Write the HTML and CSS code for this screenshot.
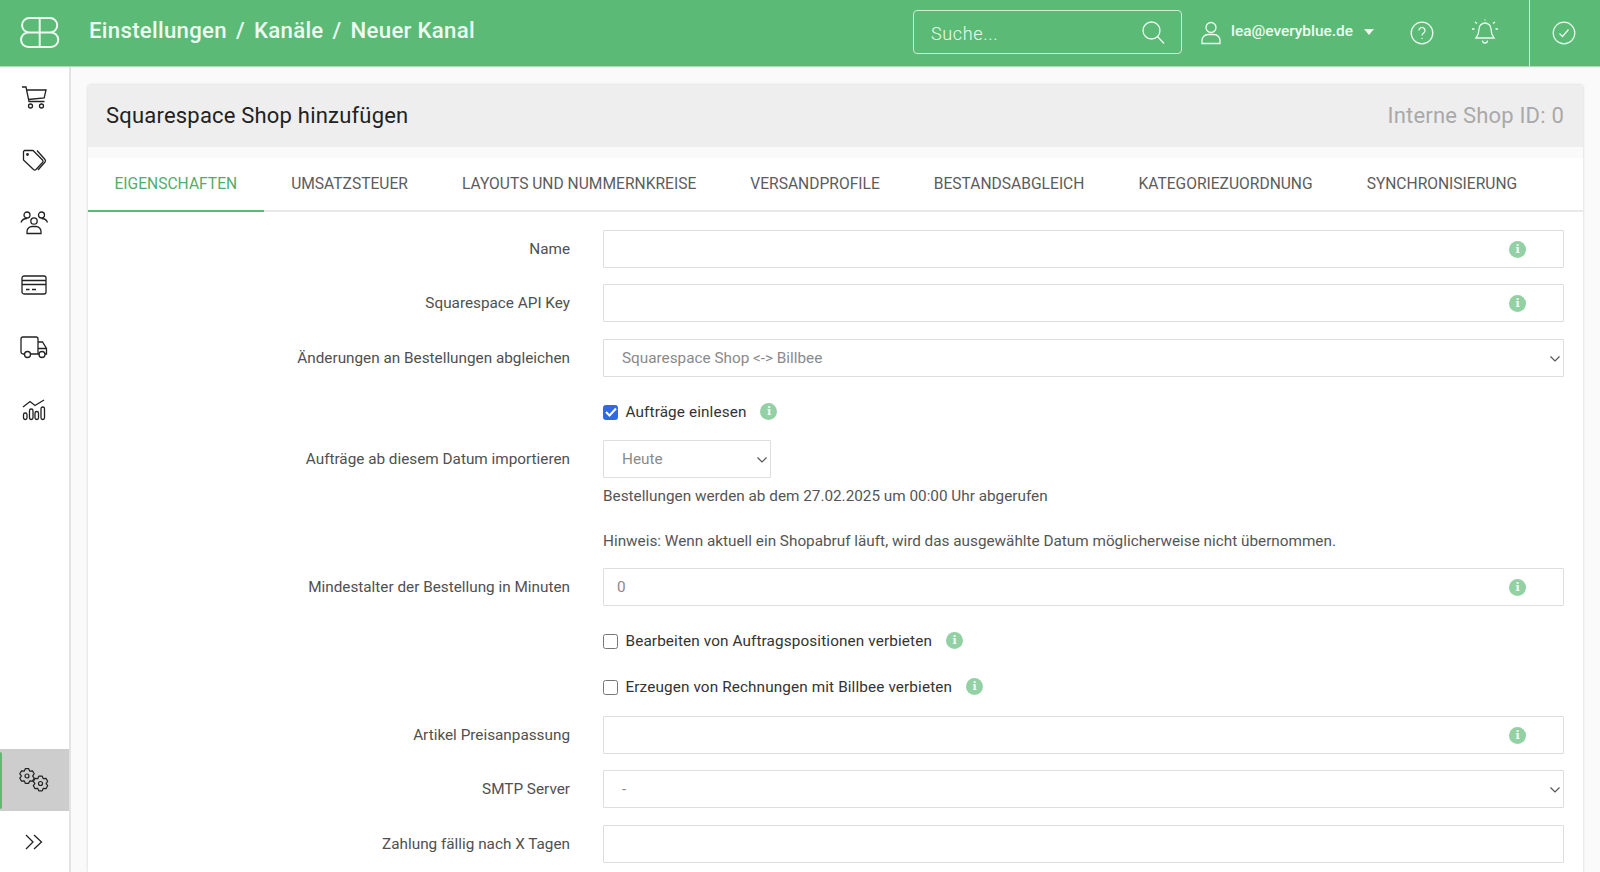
FILE: index.html
```html
<!DOCTYPE html>
<html lang="de">
<head>
<meta charset="utf-8">
<title>Neuer Kanal</title>
<link rel="stylesheet" href="styles.css">
</head>
<body>
<div class="app">
  <header class="topbar">
    <div class="logo">
      <svg width="40" height="31" viewBox="0 0 40 31" fill="none" stroke="currentColor" stroke-width="2"><path d="M19.700 1H9.300a7.250 7.250 0 0 0 0 14.500h10.400V1ZM19.700 1H30a7.250 7.250 0 0 1 0 14.500H19.700M19.700 15.500H8.300a7.250 7.250 0 0 0 0 14.500h11.400V15.500ZM19.700 15.500H31a7.250 7.250 0 0 1 0 14.500H19.700"/></svg>
    </div>
    <nav class="crumbs"><span>Einstellungen</span><span class="sep">/</span><span>Kanäle</span><span class="sep">/</span><span>Neuer Kanal</span></nav>
    <div class="search">
      <span class="search-text">Suche...</span>
      <svg width="24" height="24" viewBox="0 0 24 24" fill="none" stroke="currentColor" stroke-width="1.300"><circle cx="10.500" cy="10.500" r="8.500"/><path d="M16.500 16.500 23 23.500"/></svg>
    </div>
    <div class="user">
      <svg width="22" height="24" viewBox="0 0 22 24" fill="none" stroke="currentColor" stroke-width="1.300"><circle cx="11" cy="6.500" r="5"/><path d="M2 22.500v-3a6 6 0 0 1 6-6h6a6 6 0 0 1 6 6v3Z"/></svg>
      <span class="user-name">lea@everyblue.de</span>
      <span class="caret"></span>
    </div>
    <div class="top-icon help">
      <svg width="24" height="24" viewBox="0 0 24 24" fill="none" stroke="currentColor" stroke-width="1.300"><circle cx="12" cy="12" r="10.800"/><path d="M9 9.500a3 3 0 1 1 4.600 2.500c-1 .7-1.600 1.300-1.600 2.500M12 17v1"/></svg>
    </div>
    <div class="top-icon bell">
      <svg width="28" height="28" viewBox="0 0 28 28" fill="none" stroke="currentColor" stroke-width="1.300"><path d="M14 5a6 6 0 0 0-6 6c0 5-1.500 7-3 9h18c-1.500-2-3-4-3-9a6 6 0 0 0-6-6ZM11.500 22.500a2.500 2.500 0 0 0 5 0M14 1.500v1M4 4l2 1.500M24 4l-2 1.500M1 11h2.500M24.500 11H27"/></svg>
    </div>
    <div class="status">
      <svg width="24" height="24" viewBox="0 0 24 24" fill="none" stroke="currentColor" stroke-width="1.200"><circle cx="12" cy="12" r="10.800"/><path d="m7.500 12.500 3 3 6-7"/></svg>
    </div>
  </header>
  <div class="body">
    <aside class="sidebar">
      <a class="side-item">
        <svg width="26" height="24" viewBox="0 0 26 24" fill="none" stroke="currentColor" stroke-width="1.300"><path d="M1 1h4l3 14.500h15.500M5.700 4H25l-1.800 8L7.300 13.500"/><circle cx="9.500" cy="20" r="2"/><circle cx="20.500" cy="20" r="2"/></svg>
      </a>
      <a class="side-item">
        <svg width="25" height="23" viewBox="0 0 25 23" fill="none" stroke="currentColor" stroke-width="1.300"><path d="M2.500 1.500h8.500l9.500 9.500a1.800 1.800 0 0 1 0 2.500l-6.500 7a1.800 1.800 0 0 1-2.500 0L1.500 11V2.500Z"/><path d="M15 1.500l8 9a2 2 0 0 1 0 2.500l-7 8"/><circle cx="5.500" cy="5.500" r=".8"/></svg>
      </a>
      <a class="side-item">
        <svg width="28" height="24" viewBox="0 0 28 24" fill="none" stroke="currentColor" stroke-width="1.300"><circle cx="7" cy="4" r="3"/><circle cx="21.500" cy="4" r="3"/><circle cx="14" cy="10" r="3.200"/><path d="M1 11.500c1-3 3-4 6-4M27.500 11.500c-1-3-3-4-6-4M7 22.500v-2a5 5 0 0 1 5-5h4a5 5 0 0 1 5 5v2Z"/></svg>
      </a>
      <a class="side-item">
        <svg width="26" height="20" viewBox="0 0 26 20" fill="none" stroke="currentColor" stroke-width="1.300"><rect x="1" y="1" width="24" height="18" rx="2"/><path d="M1 5.500h24M1 9.500h24M5 14.500h3.500M11 14.500h4"/></svg>
      </a>
      <a class="side-item">
        <svg width="28" height="23" viewBox="0 0 28 23" fill="none" stroke="currentColor" stroke-width="1.300"><path d="M5 18H3a2 2 0 0 1-2-2V3a2 2 0 0 1 2-2h13a2 2 0 0 1 2 2v15h-8M18 6h4.500l4 6.500V18h-1.500M18 18h1.500M18 12.500h8.500"/><circle cx="7.500" cy="18.500" r="3"/><circle cx="22" cy="18.500" r="3"/></svg>
      </a>
      <a class="side-item">
        <svg width="24" height="22" viewBox="0 0 24 22" fill="none" stroke="currentColor" stroke-width="1.300"><path d="M1 8l7-5.500 5 4L22 1"/><rect x="1.500" y="14" width="3.500" height="6.500" rx="1.700"/><rect x="7.500" y="10" width="3.500" height="10.500" rx="1.700"/><rect x="13" y="12.500" width="3.500" height="8" rx="1.700"/><rect x="19" y="8" width="3.500" height="12.500" rx="1.700"/></svg>
      </a>
      <div class="side-spacer"></div>
      <a class="side-item active">
        <svg width="30" height="26" viewBox="0 0 30 26" fill="none" stroke="currentColor" stroke-width="1.200" stroke-linejoin="round">
          <defs><path id="gear" d="M-1.690-7.310 1.690-7.310 2.670-5.030 3.020-4.830 5.490-5.110 7.170-2.190 5.700-.2 5.700.2 7.170 2.190 5.490 5.110 3.020 4.830 2.670 5.030 1.690 7.310-1.690 7.310-2.670 5.030-3.020 4.830-5.490 5.110-7.170 2.190-5.700.2-5.700-.2-7.170-2.190-5.490-5.110-3.020-4.830-2.670-5.030Z"/></defs>
          <use href="#gear" x="8" y="9"/><circle cx="8" cy="9" r="2"/>
          <use href="#gear" x="21.500" y="16.500"/><circle cx="21.500" cy="16.500" r="2"/>
        </svg>
      </a>
      <a class="side-item last">
        <svg width="18" height="16" viewBox="0 0 18 16" fill="none" stroke="currentColor" stroke-width="1.300"><path d="m1 1 7 7-7 7M9 1l7.500 7L9 15"/></svg>
      </a>
    </aside>
    <main class="content">
      <section class="card">
        <div class="card-head">
          <h1 class="card-title">Squarespace Shop hinzufügen</h1>
          <span class="shop-id">Interne Shop ID: 0</span>
        </div>
        <ul class="tabs">
          <li class="tab current">Eigenschaften</li>
          <li class="tab">Umsatzsteuer</li>
          <li class="tab">Layouts und Nummernkreise</li>
          <li class="tab">Versandprofile</li>
          <li class="tab">Bestandsabgleich</li>
          <li class="tab">Kategoriezuordnung</li>
          <li class="tab">Synchronisierung</li>
        </ul>
        <form class="form">
          <div class="row">
            <label class="lbl">Name</label>
            <div class="ctl"><div class="field"><span class="info at-end">i</span></div></div>
          </div>
          <div class="row">
            <label class="lbl">Squarespace API Key</label>
            <div class="ctl"><div class="field"><span class="info at-end">i</span></div></div>
          </div>
          <div class="row">
            <label class="lbl">Änderungen an Bestellungen abgleichen</label>
            <div class="ctl"><div class="field select">Squarespace Shop &lt;-&gt; Billbee<svg class="chev" width="10" height="6" viewBox="0 0 10 6" fill="none" stroke="currentColor" stroke-width="1.200"><path d="m.5.500 4.500 4.500L9.500.500"/></svg></div></div>
          </div>
          <div class="row check-row first-check">
            <span class="lbl"></span>
            <div class="ctl check-ctl"><span class="box on"><svg width="12" height="10" viewBox="0 0 12 10" fill="none" stroke="#fff" stroke-width="2"><path d="m1 5 3.500 3.500L11 1.500"/></svg></span><span class="check-text">Aufträge einlesen</span><span class="info">i</span></div>
          </div>
          <div class="row date-row">
            <label class="lbl">Aufträge ab diesem Datum importieren</label>
            <div class="ctl">
              <div class="field select short">Heute<svg class="chev" width="10" height="6" viewBox="0 0 10 6" fill="none" stroke="currentColor" stroke-width="1.200"><path d="m.5.500 4.500 4.500L9.500.500"/></svg></div>
              <p class="hint">Bestellungen werden ab dem 27.02.2025 um 00:00 Uhr abgerufen</p>
              <p class="hint second">Hinweis: Wenn aktuell ein Shopabruf läuft, wird das ausgewählte Datum möglicherweise nicht übernommen.</p>
            </div>
          </div>
          <div class="row age-row">
            <label class="lbl">Mindestalter der Bestellung in Minuten</label>
            <div class="ctl"><div class="field value">0<span class="info at-end">i</span></div></div>
          </div>
          <div class="row check-row">
            <span class="lbl"></span>
            <div class="ctl check-ctl"><span class="box"></span><span class="check-text">Bearbeiten von Auftragspositionen verbieten</span><span class="info">i</span></div>
          </div>
          <div class="row check-row last-check">
            <span class="lbl"></span>
            <div class="ctl check-ctl"><span class="box"></span><span class="check-text">Erzeugen von Rechnungen mit Billbee verbieten</span><span class="info">i</span></div>
          </div>
          <div class="row">
            <label class="lbl">Artikel Preisanpassung</label>
            <div class="ctl"><div class="field"><span class="info at-end">i</span></div></div>
          </div>
          <div class="row">
            <label class="lbl">SMTP Server</label>
            <div class="ctl"><div class="field select">-<svg class="chev" width="10" height="6" viewBox="0 0 10 6" fill="none" stroke="currentColor" stroke-width="1.200"><path d="m.5.500 4.500 4.500L9.500.500"/></svg></div></div>
          </div>
          <div class="row">
            <label class="lbl">Zahlung fällig nach X Tagen</label>
            <div class="ctl"><div class="field"></div></div>
          </div>
        </form>
      </section>
    </main>
  </div>
</div>
</body>
</html>
```

FILE: styles.css
```css
* { box-sizing: border-box; }
html, body { margin: 0; height: 100%; overflow: hidden; }
body { font-family: Roboto, "Liberation Sans", sans-serif; color: #212529; background: #fafafa; }
.app { height: 872px; display: flex; flex-direction: column; }

.topbar { height: 67px; flex: none; background: #5bba76; color: #eefaf1; display: flex; align-items: center; border-bottom: 1px solid #a9dcb7; }
.logo { width: 89px; flex: none; padding-left: 20px; margin-top: -2px; display: flex; align-items: center; }
.crumbs { flex: 1; display: flex; gap: 9px; font-size: 22.200px; font-weight: 500; letter-spacing: .3px; margin-top: -7px; }
.search { width: 269px; height: 44px; flex: none; margin-top: -3px; border: 1px solid #c9efd4; border-radius: 4px; padding: 0 16px 0 17px; display: flex; align-items: center; justify-content: space-between; }
.search-text { font-size: 18px; letter-spacing: .65px; font-weight: 300; margin-top: 4px; }
.user { margin-left: 18px; width: 194px; flex: none; display: flex; align-items: center; }
.user-name { font-size: 15.400px; font-weight: 500; margin-left: 9px; margin-top: -5px; }
.caret { margin-left: 11px; margin-top: -3px; border: 5.500px solid transparent; border-top: 6px solid #eefaf1; border-bottom: 0; }
.top-icon { flex: none; display: flex; align-items: center; justify-content: center; }
.help { width: 24px; margin-left: 16px; }
.bell { width: 28px; margin-left: 37px; margin-top: -2px; }
.status { flex: none; width: 71px; height: 66px; margin-left: 30px; border-left: 1px solid #d8f0df; display: flex; align-items: center; justify-content: center; padding-right: 2px; }

.body { flex: 1; display: flex; min-height: 0; }
.sidebar { width: 71px; flex: none; background: #fff; border-right: 2px solid #e3e3e3; display: flex; flex-direction: column; color: #222; }
.side-item { height: 62.300px; flex: none; display: flex; align-items: center; justify-content: center; padding-right: 1px; }
.side-spacer { flex: 1; }
.side-item.active { background: #cdcdcd; position: relative; height: 62px; }
.side-item.active::before { content: ""; position: absolute; left: 0; top: 3px; bottom: 2px; width: 2px; background: #5bba76; border-radius: 0 2px 2px 0; }
.side-item.last { height: 61px; }

.content { flex: 1; min-width: 0; padding: 18px 17px 0 17px; }
.card { height: 100%; background: #fafafa; box-shadow: 0 0 3px rgba(0,0,0,.18); border-radius: 3px 3px 0 0; overflow: hidden; }
.card-head { height: 62px; background: #eeeeee; padding: 0 19px 2px 18px; display: flex; align-items: center; justify-content: space-between; }
.card-title { margin: 0; font-size: 22px; font-weight: 400; letter-spacing: .2px; color: #222; }
.shop-id { font-size: 22px; color: #a9a9a9; letter-spacing: .2px; }

.tabs { list-style: none; margin: 11px 0 0; padding: 0; height: 54px; display: flex; border-bottom: 2px solid #e9e9e9; background: #fff; }
.tab { padding: 0 27px; height: 54px; line-height: 53px; font-size: 15.600px; text-transform: uppercase; color: #5c5c5c; white-space: nowrap; }
.tab.current { color: #4fae6b; border-bottom: 2px solid #5bba76; padding-left: 26.500px; }

.form { padding: 17.500px 19px 20px 0; background: #fff; }
.row { display: flex; align-items: flex-start; margin-bottom: 16.600px; }
.lbl { width: 482px; flex: none; text-align: right; font-size: 15.300px; line-height: 38px; color: #505050; }
.ctl { flex: 1; margin-left: 33px; min-width: 0; }
.field { position: relative; height: 38px; border: 1px solid #dedede; border-radius: 1px; background: #fff; font-size: 15.300px; line-height: 36px; color: #8a8a8a; }
.field.value { padding-left: 13px; }
.field.select { padding-left: 18px; box-shadow: 0 0 1px rgba(0,0,0,.05); }
.field.short { width: 168px; }
.chev { position: absolute; right: 3px; top: 16px; color: #555; }
.info { display: inline-flex; width: 17px; height: 17px; flex: none; margin-top: -2px; align-items: center; justify-content: center; border-radius: 50%; background: #93d1a5; color: #f2fbf5; font-family: "DejaVu Serif", serif; font-size: 11px; font-weight: 700; line-height: 1; }
.info.at-end { position: absolute; right: 37px; top: 10px; margin-top: 0; }

.check-row { margin-bottom: 0; height: 46px; }
.first-check { height: 46px; margin-bottom: 1px; }
.last-check { height: 47.500px; }
.check-row .lbl { line-height: 46px; }
.check-ctl { display: flex; align-items: center; height: 38px; }
.box { width: 15px; height: 15px; flex: none; border: 1px solid #767676; border-radius: 2.500px; background: #fff; display: flex; align-items: center; justify-content: center; }
.box.on { background: #2d6cdf; border-color: #2d6cdf; }
.check-text { font-size: 15.300px; color: #333; margin-left: 7.500px; margin-right: 14px; letter-spacing: .12px; }

.date-row { margin-bottom: 17px; }
.age-row { margin-bottom: 16.100px; }
.hint { margin: 8px 0 0; font-size: 15.300px; line-height: 20px; color: #555; }
.hint.second { margin-top: 25px; }
```
